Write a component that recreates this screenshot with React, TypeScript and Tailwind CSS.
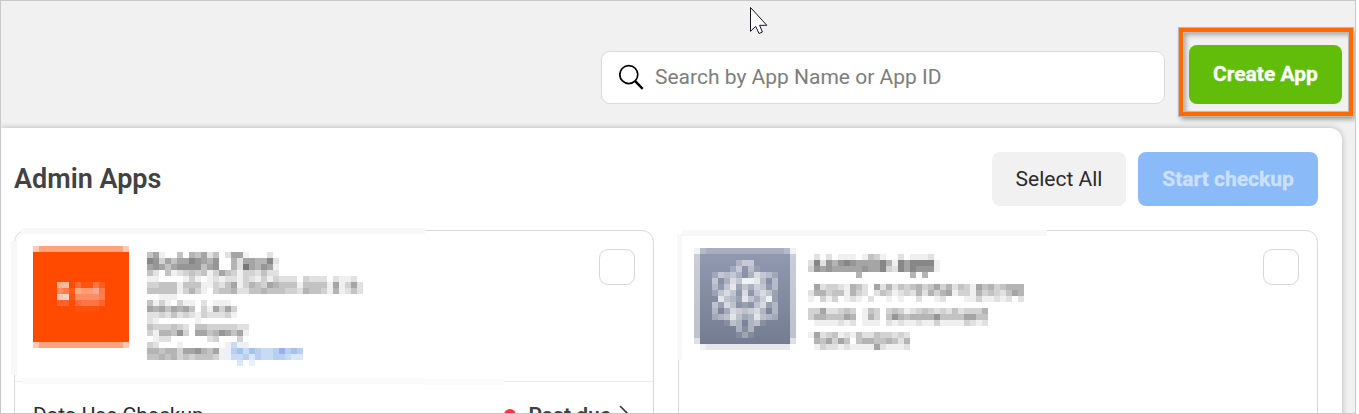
import React from "react";

const GREYS = "0123456789";
const BLUES: Record<string, string> = {
  a: "#eaf1fb",
  b: "#dae7fa",
  c: "#c8daf4",
  d: "#b8cff0",
  e: "#a4c3ec",
  f: "#92b4e8",
};

function greyOf(ch: string): string {
  const v = 255 - GREYS.indexOf(ch) * 15;
  return `rgb(${v},${v},${v})`;
}

const LEFT_TEXT = [
  "461004054624026610002000000000000000",
  "873646687657005266558200000000000000",
  "676467777467005296576100000000000000",
  "420412343413643133242200000000000000",
  "110000131012122132131322203222021120",
  "334441444113246135436544414444161362",
  "444441353103445224454443325443151242",
  "001110000000000000",
  "413103110201110000",
  "656465640316363000",
  "223242321322231000",
  "210000001000000000",
  "433343204433333220",
  "315547306645764610",
  "012200000023000300",
  "32000100000001caa0",
  "5545536675461adecedccdfded",
  "4454534344431accdbdccddcbb",
  "000000000000000b0a",
];

const RIGHT_TEXT = [
  "020201110143100201112",
  "2827578766668518688881",
  "3767666667668328687771",
  "00000000500000000505",
  "",
  "062332154206252434534635243164534555",
  "255344153202431232525356133153432465",
  "103130121020010100200120001131121202",
  "",
  "336223430143034312343232423335",
  "355444650153047545555744446644",
  "011112120111021211211311113212",
  "",
  "16234121422433232",
  "05463640455445425",
  "01322121111621112",
];

const ORANGE_CELLS = [
  ["#ffb093", "#ffb8a0", "#ff4c02", "#ff6a35", "#ff5510", "#ff5510", "#ff7744", "#ff5d20"],
  ["#ff8c60", "#ff7a48", "#ff5c1c", "#faab8c", "#ff9c75", "#ff9c75", "#f0a898", "#ff7a48"],
  ["#f8c4b4", "#f5d0c6", "#ff5510", "#ff8c62", "#ff8c62", "#ff8c62", "#ff8c62", "#ff7f50"],
  ["#ff6228", "#ff6228", "#ff4c05", "#ff6a35", "#ff7440", "#ff7440", "#ff7440", "#ff6228"],
  ["#ff4a00", "#ff4a00", "#ff4a00", "#ff5008", "#ff5008", "#ff5008", "#ff5008", "#ff4a00"],
];

const ATOM = [
  "00000000000000000",
  "00000000000000000",
  "00000003550000000",
  "00000025041000000",
  "00025453037542000",
  "00050375998404000",
  "00041582536514000",
  "00025751715752000",
  "00008542853692000",
  "00052751215724000",
  "00040376567404000",
  "00034585348543000",
  "00000154045100000",
  "00000004140000000",
  "00000001310000000",
];

function Mosaic({ rows, cols }: { rows: string[]; cols: number }) {
  return (
    <svg width={cols * 6} height={rows.length * 6} shapeRendering="crispEdges" className="block">
      {rows.flatMap((row, y) =>
        row.split("").map((ch, x) =>
          ch === "0" ? null : (
            <rect key={`${x}-${y}`} x={x * 6} y={y * 6} width="6" height="6" fill={BLUES[ch] ?? greyOf(ch)} />
          )
        )
      )}
    </svg>
  );
}

function OrangeLogo() {
  return (
    <svg width="96" height="102" shapeRendering="crispEdges" className="block">
      <rect width="96" height="102" fill="#ffa37d" />
      <rect width="6" height="102" fill="#ffcab5" />
      <rect x="90" width="6" height="102" fill="#ffcab5" />
      <rect y="6" width="96" height="90" fill="#ff4a00" />
      {ORANGE_CELLS.flatMap((row, y) =>
        row.map((c, x) => <rect key={`${x}-${y}`} x={24 + x * 6} y={36 + y * 6} width="6" height="6" fill={c} />)
      )}
    </svg>
  );
}

function AtomLogo() {
  return (
    <svg width="102" height="102" shapeRendering="crispEdges" className="block">
      <defs>
        <linearGradient id="slate" x1="0" y1="0" x2="0" y2="1">
          <stop offset="0" stopColor="#929bb1" />
          <stop offset="1" stopColor="#737c90" />
        </linearGradient>
      </defs>
      <rect width="102" height="96" fill="url(#slate)" />
      <rect y="6" width="6" height="90" fill="#fff" opacity=".52" />
      <rect x="96" y="6" width="6" height="90" fill="#fff" opacity=".52" />
      <rect x="6" width="90" height="6" fill="#fff" opacity=".2" />
      <rect x="6" width="6" height="6" fill="#fff" opacity=".15" />
      <rect x="90" width="6" height="6" fill="#fff" opacity=".15" />
      <rect width="6" height="6" fill="#f0f2f4" />
      <rect x="96" width="6" height="6" fill="#f0f2f4" />
      <rect y="90" width="6" height="6" fill="#dde0e6" />
      <rect x="96" y="90" width="6" height="6" fill="#dde0e6" />
      <rect x="6" y="96" width="90" height="6" fill="#e6e8ec" />
      <rect x="6" y="96" width="6" height="6" fill="#f0f2f4" />
      {ATOM.flatMap((row, y) =>
        row.split("").map((ch, x) =>
          ch === "0" ? null : (
            <rect key={`${x}-${y}`} x={x * 6} y={y * 6} width="6" height="6" fill="#fff" opacity={Number(ch) * 0.098} />
          )
        )
      )}
    </svg>
  );
}

function Checkbox() {
  return <div className="size-9 shrink-0 rounded-[9px] border border-[#d6d6d6] bg-white" />;
}

export default function App() {
  return (
    <div className="h-[414px] w-[1359px] overflow-hidden bg-white font-['Roboto',sans-serif]">
      <div className="relative flex h-[414px] w-[1356px] flex-col overflow-hidden border border-[#c8c8c8] bg-[#f1f1f1]">
        <header className="flex h-[127px] shrink-0 items-start justify-end pr-[13px]">
          <div className="mt-[50px] mr-6 flex h-[53px] w-[564px] items-center rounded-[9px] border border-[#dadada] bg-white pb-[2px] pl-[17px]">
            <svg width="25" height="26" viewBox="0 0 25 26" fill="none" stroke="#000" className="shrink-0">
              <circle cx="9.8" cy="10.6" r="9" strokeWidth="1.7" />
              <path d="M16.2 17.2 L23.7 24.8" strokeWidth="2.4" />
            </svg>
            <span className="ml-[11px] text-[21px] leading-6 whitespace-nowrap text-[#7d7d7d]">
              Search by App Name or App ID
            </span>
          </div>
          <div className="relative mt-11">
            <button className="flex h-[59px] w-[153px] items-center justify-center rounded-[8px] bg-[#62bd0b] pb-[2px] text-[21px] leading-6 font-bold text-white [-webkit-text-stroke:0.3px_#fff]">
              Create App
            </button>
            <div className="pointer-events-none absolute -top-[17px] -left-[10px] h-[88px] w-[174px] border-4 border-[#ff6a00] shadow-[0_0_0_1px_#b9b9b9,2px_3px_5px_rgba(0,0,0,0.4),inset_0_0_0_1px_#bbbbbb,inset_3px_3px_5px_rgba(0,0,0,0.3)]" />
          </div>
        </header>

        <main className="mr-[13px] flex grow flex-col rounded-tr-[12px] bg-white pr-6 pl-[13px] shadow-[0_0_6px_rgba(0,0,0,0.25)]">
          <div className="flex h-[102px] shrink-0 items-center">
            <h1 className="grow text-[27px] leading-8 font-semibold text-[#424242]">Admin Apps</h1>
            <button className="mr-3 flex h-[54px] w-[134px] items-center justify-center rounded-[8px] bg-[#f1f1f1] text-[21px] leading-6 text-[#2b2b2b]">
              Select All
            </button>
            <button className="flex h-[54px] w-[180px] items-center justify-center rounded-[8px] bg-[#8bbaf9] text-[21px] leading-6 font-bold text-[#cce0fc] [-webkit-text-stroke:0.3px_#cce0fc]">
              Start checkup
            </button>
          </div>

          <div className="flex gap-6">
            <section className="relative h-[220px] w-[640px] rounded-t-[12px] border border-[#d9d9d9] bg-white">
              <div className="flex h-[151px] items-start border-b border-[#ededed] pr-[18px] pl-[18px]">
                <div className="mt-[15px]">
                  <OrangeLogo />
                </div>
                <div className="mt-[21px] ml-[18px] grow">
                  <Mosaic rows={LEFT_TEXT} cols={36} />
                </div>
                <div className="mt-[18px]">
                  <Checkbox />
                </div>
              </div>
              <div className="flex items-center pt-[19px] pl-[18px] text-[21px] leading-7 text-[#2b2b2b]">
                <span className="grow">Data Use Checkup</span>
                <span className="mr-3 size-[12px] rounded-full bg-[#fa383e]" />
                <span className="font-semibold text-[#424242]">Past due</span>
                <svg width="12" height="20" viewBox="0 0 12 20" fill="none" stroke="#333" strokeWidth="1.6" className="mr-[22px] ml-[8px]">
                  <path d="M1 1 L10 10 L1 19" />
                </svg>
              </div>
              <div className="absolute -top-[3px] left-[6px] h-[6px] w-[404px] bg-[#f8f8f8]" />
              <div className="absolute top-[10px] -left-[4px] h-[134px] w-[6px] bg-[#f8f8f8]" />
              <div className="absolute top-[147px] left-[6px] h-[6px] w-[404px] bg-[#fbfbfb]" />
              <div className="absolute top-[148px] left-[410px] h-[6px] w-[79px] bg-[#fbfbfb]" />
            </section>

            <section className="relative h-[220px] w-[640px] rounded-t-[12px] border border-[#d9d9d9] bg-white">
              <div className="flex items-start pr-[18px] pl-[15px]">
                <div className="mt-[17px]">
                  <AtomLogo />
                </div>
                <div className="mt-[23px] ml-3 grow">
                  <Mosaic rows={RIGHT_TEXT} cols={36} />
                </div>
                <div className="mt-[18px]">
                  <Checkbox />
                </div>
              </div>
              <div className="absolute -top-[1px] left-[3px] h-[6px] w-[365px] bg-[#f8f8f8]" />
              <div className="absolute top-[3px] -left-[2px] h-[126px] w-[5px] bg-[#f8f8f8]" />
            </section>
          </div>
        </main>

        <svg width="20" height="29" viewBox="0 0 20 29" className="absolute top-[6px] left-[748px]">
          <path
            d="M1.5 0.5 V24.3 L6.7 19.4 L10 26.5 L13.4 25 L10.6 18.3 H17.8 Z"
            fill="#fff"
            stroke="#15152a"
            strokeWidth="1"
          />
        </svg>
      </div>
    </div>
  );
}
